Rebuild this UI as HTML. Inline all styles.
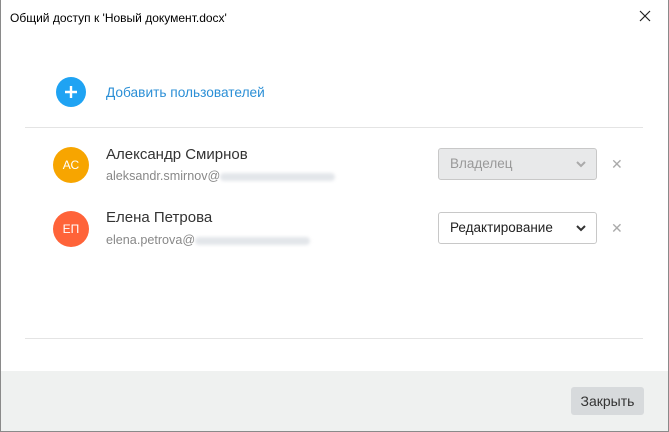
<!DOCTYPE html>
<html><head><meta charset="utf-8"><style>
*{box-sizing:border-box;margin:0;padding:0}
body{width:669px;height:432px;background:#fff;font-family:"Liberation Sans","Noto Sans CJK SC",sans-serif;position:relative;overflow:hidden}
.win{position:absolute;left:0;top:0;width:669px;height:432px;border:1px solid #8a8a8a;border-top:none}
.abs{position:absolute}
.title{left:10px;top:11px;font-size:12px;color:#000}
.close{left:638px;top:9px;width:14px;height:14px}
.add{left:56px;top:77px;width:30px;height:30px;border-radius:50%;background:#1fa3f3}
.addt{left:106px;top:85px;font-size:13.7px;color:#2b8fd6}
.sep{height:1px;background:#e4e4e4;left:25px;width:618px}
.av{width:36px;height:36px;border-radius:50%;color:#fff;font-size:12px;text-align:center;line-height:36px}
.name{left:106px;font-size:15px;color:#333}
.mail{left:106px;font-size:12.6px;color:#888}
.blur{display:inline-block;width:115px;height:8px;background:#e3e6ea;border-radius:4px;vertical-align:-1px;filter:blur(1.5px)}
.sel{left:438px;width:159px;height:32px;border:1px solid #c8c8c8;border-radius:3px;font-size:13.5px;padding-left:11px;line-height:30px}
.x{left:611px;font-size:14px;color:#aaa}
.foot{left:1px;top:371px;width:667px;height:60px;background:#eff1f0}
.btn{left:571px;top:387px;width:73px;height:28px;background:#d7dadc;border-radius:3px;font-size:14px;color:#333;text-align:center;line-height:28px}
</style></head><body>
<div class="win"></div>
<div class="abs title">Общий доступ к 'Новый документ.docx'</div>
<svg class="abs close" viewBox="0 0 14 14"><path d="M2 2L12 12M12 2L2 12" stroke="#222" stroke-width="1.2"/></svg>
<div class="abs add"><svg width="30" height="30" viewBox="0 0 30 30"><path d="M15 9v12M9 15h12" stroke="#fff" stroke-width="2.4"/></svg></div>
<div class="abs addt">Добавить пользователей</div>
<div class="abs sep" style="top:127px"></div>
<div class="abs av" style="left:53px;top:147px;background:#f7a500">АС</div>
<div class="abs name" style="top:146px">Александр Смирнов</div>
<div class="abs mail" style="top:169px">aleksandr.smirnov@<span class="blur"></span></div>
<div class="abs sel" style="top:148px;background:#e8e9ea;color:#999">Владелец<svg class="abs" style="right:10px;top:12px" width="10" height="7" viewBox="0 0 10 7"><path d="M1 1l4 4 4-4" stroke="#aaa" stroke-width="2" fill="none"/></svg></div>
<div class="abs x" style="top:156px">✕</div>
<div class="abs av" style="left:53px;top:211px;background:#ff6339">ЕП</div>
<div class="abs name" style="top:209px">Елена Петрова</div>
<div class="abs mail" style="top:233px">elena.petrova@<span class="blur"></span></div>
<div class="abs sel" style="top:212px;background:#fff;color:#222">Редактирование<svg class="abs" style="right:10px;top:12px" width="10" height="7" viewBox="0 0 10 7"><path d="M1 1l4 4 4-4" stroke="#333" stroke-width="2" fill="none"/></svg></div>
<div class="abs x" style="top:220px">✕</div>
<div class="abs sep" style="top:338px"></div>
<div class="abs foot"></div>
<div class="abs btn">Закрыть</div>
</body></html>
